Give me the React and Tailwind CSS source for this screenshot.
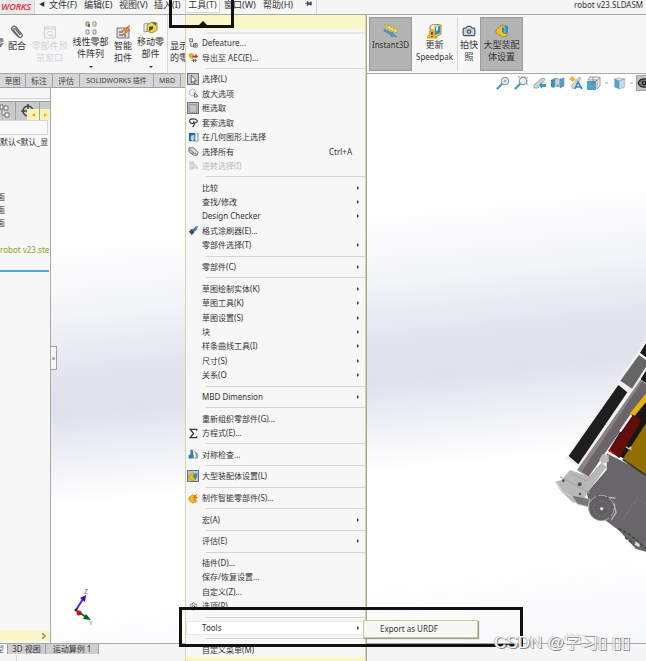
import React from 'react';
import { Camera, Settings, Eye, Pin } from 'lucide-react';

const menus = ['文件(F)', '编辑(E)', '视图(V)', '插入(I)'];

const toolMenu = [
  [
    { label: 'Defeature...', icon: 'defeature' },
    { label: '导出至 AEC(E)...', icon: 'export' }
  ],
  [
    { label: '选择(L)', icon: 'cursor', active: true },
    { label: '放大选项', icon: 'magnify' },
    { label: '框选取', icon: 'box', active: true },
    { label: '套索选取', icon: 'lasso' },
    { label: '在几何图形上选择', icon: 'geometry' },
    { label: '选择所有', icon: 'selectAll', shortcut: 'Ctrl+A' },
    { label: '逆转选择(I)', icon: 'invert', disabled: true }
  ],
  [
    { label: '比较', sub: true },
    { label: '查找/修改', sub: true },
    { label: 'Design Checker', sub: true },
    { label: '格式涂刷器(E)...', icon: 'painter' },
    { label: '零部件选择(T)', sub: true }
  ],
  [{ label: '零部件(C)', sub: true }],
  [
    { label: '草图绘制实体(K)', sub: true },
    { label: '草图工具(K)', sub: true },
    { label: '草图设置(S)', sub: true },
    { label: '块', sub: true },
    { label: '样条曲线工具(I)', sub: true },
    { label: '尺寸(S)', sub: true },
    { label: '关系(O', sub: true }
  ],
  [{ label: 'MBD Dimension', sub: true }],
  [
    { label: '重新组织零部件(G)...' },
    { label: '方程式(E)...', icon: 'sigma' }
  ],
  [{ label: '对称检查...', icon: 'symmetry' }],
  [{ label: '大型装配体设置(L)', icon: 'assembly', active: true }],
  [{ label: '制作智能零部件(S)...', icon: 'smart' }],
  [{ label: '宏(A)', sub: true }],
  [{ label: '评估(E)', sub: true }],
  [
    { label: '插件(D)...' },
    { label: '保存/恢复设置...' },
    { label: '自定义(Z)...' },
    { label: '选项(P)', icon: 'gear' }
  ],
  [{ label: 'Tools', sub: true, open: true }],
  [{ label: '自定义菜单(M)' }]
];

const MenuIcon = ({ name }) => {
  if (name === 'gear') return <Settings className="h-[9px] w-[9px] text-gray-600" />;
  const shapes = {
    defeature: (
      <g fill="none" stroke="#666" strokeWidth="1">
        <rect x="2" y="1" width="3" height="3" />
        <path d="M3 5v4h3M6 6h4v4H6z" />
        <circle cx="8" cy="8" r="1" />
      </g>
    ),
    export: (
      <g>
        <path d="M1 3l3-2 2 2-1 4-3-1z" fill="#e8b820" stroke="#a67c00" strokeWidth=".5" />
        <path d="M5 4h3V2l3 3-3 2V6H5z" fill="#dd2222" />
        <path d="M4 9h6M6 8v3M8 8v3" stroke="#555" strokeWidth="1" />
      </g>
    ),
    cursor: <path d="M4 1v9l2-2 1 3 1.500-.5-1-3h2.500z" fill="#fff" stroke="#333" strokeWidth=".8" />,
    magnify: (
      <g fill="none" stroke="#999">
        <circle cx="5" cy="5" r="3.500" strokeDasharray="2 .6" />
        <path d="M7 5v5l1-1 1 2M7 5l4 4H9" stroke="#666" />
      </g>
    ),
    box: <rect x="1.500" y="1.500" width="9" height="9" fill="#c4c4c4" stroke="#666" strokeDasharray="1.500 1" />,
    lasso: <path d="M6 7C1 8 0 2 5 2s7 3 3 4.500C6 7 5 5 7 5M7 7c0 2-1 3-2 4" fill="none" stroke="#333" strokeWidth="1.200" />,
    geometry: (
      <g>
        <rect x="1" y="1" width="7" height="9" fill="#1e6e92" />
        <path d="M3 4l4-1v5l-2 2-2-2z" fill="#a9d3e6" />
        <path d="M9 2h2v8H8" fill="none" stroke="#888" />
      </g>
    ),
    selectAll: <path d="M1 2h5l5 5-1 3H6L1 6zM2 4l5 4h2M3 8h3" fill="#ddd" stroke="#666" strokeWidth="1" />,
    invert: <path d="M2 2h4v3H2zM6 4v6l2-2 2 2V7zM2 7h3v3H2z" fill="#ddd" stroke="#ccc" strokeWidth="1" />,
    painter: (
      <g>
        <path d="M2 5l4-1 3-3 2 1-2 4-3 2z" fill="#3e7fa5" />
        <path d="M1 7l3-2 3 3-3 3z" fill="#444" />
        <path d="M8 2l3-1-1 3z" fill="#5fb4dc" />
      </g>
    ),
    sigma: <path d="M9.500 3V1.500H2.500L6 6l-3.500 4.500h7V9" fill="none" stroke="#333" strokeWidth="1.400" />,
    symmetry: (
      <g>
        <path d="M1 10V7l2-1V1h2l1 9z" fill="#2d8ab0" stroke="#235c74" strokeWidth=".5" />
        <path d="M7 3l2 1v6H7M9 4l2 3-1 3" fill="none" stroke="#777" />
      </g>
    ),
    assembly: (
      <g>
        <path d="M1 5l4-3 4 1v2L6 6l3 2v2l-4 1-4-3z" fill="#f0bc16" stroke="#917000" strokeWidth=".5" />
        <path d="M7 3l4-1v5L8 9 6 6z" fill="#318db9" />
      </g>
    ),
    smart: (
      <g>
        <path d="M1 5l4-3 4 1v2L6 6l3 2v2l-4 1-4-3z" fill="#f0bc16" stroke="#a67c00" strokeWidth=".6" />
        <path d="M10 1L6 5h4L6 9" fill="none" stroke="#e05a1a" strokeWidth="1" />
      </g>
    )
  };
  return (
    <svg viewBox="0 0 12 12" className="h-[11px] w-[11px]" aria-hidden="true">
      {shapes[name]}
    </svg>
  );
};

const MenuItem = ({ item }) => (
  <div className="relative flex min-h-0 flex-[2_1_0%]">
    <button
      disabled={item.disabled}
      className={`flex min-h-0 w-full items-center text-left text-[8px] leading-[12px] ${
        item.open ? 'border border-gray-200 bg-white' : 'border border-transparent'
      } ${item.disabled ? 'text-[#b8b8b8]' : 'text-[#333]'}`}
    >
      <span
        className={`mr-[3px] flex h-[12px] w-[12px] shrink-0 items-center justify-center ${
          item.active ? 'border border-gray-500 bg-[#c4c4c4]' : ''
        }`}
      >
        {item.icon && <MenuIcon name={item.icon} />}
      </span>
      <span className="grow whitespace-nowrap">{item.label}</span>
      {item.shortcut && <span className="pr-[12px]">{item.shortcut}</span>}
      {item.sub && (
        <svg viewBox="0 0 2 4" className="mr-[5px] h-[4px] w-[2px]" aria-hidden="true">
          <path d="M0 0l2 2-2 2z" fill="#333" />
        </svg>
      )}
    </button>
    {item.open && (
      <button className="absolute top-[-1px] left-full z-10 ml-[-2px] h-[18px] w-[115px] border border-[#cfcb8d] bg-[#f7f7f7] pl-[16px] text-left text-[8px] leading-[16px] whitespace-nowrap text-[#333] shadow-[1px_1px_1px_#999]">
        Export as URDF
      </button>
    )}
  </div>
);

const ToolsMenu = () => (
  <div className="absolute top-[15px] bottom-0 left-[185px] z-10 flex w-[181px] flex-col border-x border-[#d8d5a5] bg-[#f7f7f7] shadow-[1px_0_0_#a5a59c]">
    <div className="flex h-[14px] shrink-0 items-center bg-[#f9f7c5] pl-[13px]">
      <svg viewBox="0 0 8 4" className="mt-[2px] h-[4px] w-[8px]" aria-hidden="true">
        <path d="M0 4l4-4 4 4z" fill="#111" />
      </svg>
    </div>
    <div className="flex h-[7px] shrink-0 items-center pl-[20px]">
      <span className="h-[2px] w-full bg-[#e6e6e6]" />
    </div>
    {toolMenu.map((group, i) => (
      <React.Fragment key={i}>
        {i > 0 && (
          <div className="flex min-h-0 flex-[1_1_0%] items-center pl-[20px]">
            <span className="h-px w-full bg-[#d4d4d4]" />
          </div>
        )}
        {group.map((item) => (
          <MenuItem key={item.label} item={item} />
        ))}
      </React.Fragment>
    ))}
    <div className="h-[4px] shrink-0 bg-[#f9f7c5]" />
  </div>
);

const MenuBar = () => (
  <header className="flex h-[15px] shrink-0 items-start overflow-hidden border-b border-[#a8a8a8] bg-[#f5f5f5] text-[9px] leading-[10px] whitespace-nowrap text-[#333]">
    <div className="flex h-full w-[35px] shrink-0 justify-end border-r border-gray-300 bg-[#e9e9e9] pr-[3px] font-['Open_Sans','Noto_Sans',sans-serif] text-[9px] leading-[14px] font-semibold text-[#e02b33] italic">
      WORKS
    </div>
    <span className="w-[14px] shrink-0 pl-[4px] text-[6px] leading-[8px]">◀</span>
    <nav className="flex shrink-0">
      {menus.map((m) => (
        <button key={m} className="h-[10px] w-[35px] text-left">{m}</button>
      ))}
      <button className="ml-[-4px] h-[13px] w-[35px] border border-t-0 border-gray-300 bg-white pb-[2px] text-center">工具(T)</button>
      <button className="ml-[4px] h-[10px] w-[39px] text-left">窗口(W)</button>
      <button className="h-[10px] w-[38px] text-left">帮助(H)</button>
    </nav>
    <span className="flex h-full w-[16px] shrink-0 justify-center border-r border-gray-300">
      <Pin className="h-[7px] w-[7px] rotate-90 fill-gray-600" />
    </span>
    <div className="ml-auto w-[72px] shrink-0 text-[8px] leading-[9px]">robot v23.SLDASM</div>
  </header>
);

const RibbonButton = ({ lines, icon, width, disabled, arrow, active, top = 'pt-[9px]' }) => (
  <button
    disabled={disabled}
    className={`flex shrink-0 flex-col items-center text-[9px] leading-[12px] whitespace-nowrap ${width} ${top} ${
      active ? 'border border-[#9a9a9a] bg-[#b3b3b3]' : ''
    } ${disabled ? 'text-gray-300' : 'text-[#333]'}`}
  >
    <span className="flex h-[16px] items-center">{icon}</span>
    {lines.map((l) => (
      <span key={l} className={/^[A-Z]/.test(l) ? 'text-[8px]' : ''}>{l}</span>
    ))}
    {arrow && (
      <svg viewBox="0 0 4 2" className="mt-[6px] h-[2px] w-[4px]" aria-hidden="true">
        <path d="M0 0h4L2 2z" fill="#333" />
      </svg>
    )}
  </button>
);

const ClipIcon = () => (
  <svg viewBox="0 0 14 14" className="h-[14px] w-[14px]" fill="none" stroke="#666" strokeWidth="1.300" strokeLinecap="round" aria-hidden="true">
    <path d="M4 6l5 6c1.500 1.500 4-.5 3-2.500L6 2C4 0 .5 2.500 2 5l6 6.500M10 9.500L5.500 4C4.500 3 3 4 3.700 5.200" />
  </svg>
);

const PatternIcon = () => (
  <svg viewBox="0 0 14 15" className="h-[15px] w-[14px]" aria-hidden="true">
    <path d="M2 1h3v4H2z" fill="#e9d13a" stroke="#777" strokeWidth=".8" />
    <path d="M9 1h3v4H9zM2 9h3v4H2zM9 9h3v4H9z" fill="#eee" stroke="#777" strokeWidth=".8" />
    <path d="M4 3h2v3H4z" fill="#2e7c9b" />
    <path d="M9 3h2v2H9z" fill="#e9d13a" />
  </svg>
);

const PreviewIcon = () => (
  <svg viewBox="0 0 14 14" className="h-[13px] w-[14px]" fill="none" stroke="#ccc" aria-hidden="true">
    <path d="M1 1h12v12H1zM1 3h12" />
    <circle cx="7" cy="8" r="2.500" />
    <path d="M9 10l3 2" />
  </svg>
);

const FastenerIcon = () => (
  <svg viewBox="0 0 15 14" className="h-[14px] w-[15px]" aria-hidden="true">
    <path d="M1 3h12v10H1z" fill="#ddd" stroke="#777" />
    <path d="M3 7h4M3 10h4M9 9v3" stroke="#777" strokeWidth="1.500" />
    <path d="M14 0L6 6h4l-3 4 7-5h-4z" fill="#f4a52a" stroke="#d1541c" strokeWidth=".7" />
  </svg>
);

const MoveIcon = () => (
  <svg viewBox="0 0 15 14" className="h-[14px] w-[15px]" aria-hidden="true">
    <path d="M1 3l4-1v8l-4 1z" fill="#eee" stroke="#888" strokeWidth=".8" />
    <path d="M4 4l5-3 5 1v7l-5 3-5-2z" fill="#f0d84a" stroke="#8a7a20" strokeWidth=".8" />
    <path d="M6 6l4-1v3l-4 2z" fill="#444" />
    <path d="M9 2l4-1v4z" fill="#2e7c9b" />
  </svg>
);

const InstantIcon = () => (
  <svg viewBox="0 0 16 14" className="h-[14px] w-[16px]" aria-hidden="true">
    <path d="M3 0l11 5v4L3 4z" fill="#f4dc5a" stroke="#a08a1c" strokeWidth=".4" />
    <path d="M5 3V1M8 4V3M11 6V4" stroke="#8a741a" strokeWidth=".7" />
    <path d="M1 5l8 4V8l5 5-7-1 1-1-7-4z" fill="#4b9cc4" stroke="#2f6e90" strokeWidth=".4" />
  </svg>
);

const SpeedpakIcon = () => (
  <svg viewBox="0 0 15 15" className="h-[15px] w-[15px]" aria-hidden="true">
    <path d="M3 2l4-2 7 1v9l-5 3-6-3z" fill="#e6d24c" stroke="#777" strokeWidth=".8" />
    <path d="M8 3l5-1v7l-5 2z" fill="#2f8fc0" />
    <path d="M4 2l3-1v4l-3 1zM9 3l2-1v4l-2 1z" fill="#fff" />
    <path d="M5 5l5 9H0z" fill="#fbb917" stroke="#c07f00" strokeWidth=".6" />
    <path d="M5 8v3M5 12v1" stroke="#222" strokeWidth="1.300" />
  </svg>
);

const AssemblyIcon = () => (
  <svg viewBox="0 0 14 14" className="h-[14px] w-[14px]" aria-hidden="true">
    <path d="M1 6l6-5 5 1v2L8 7l4 3v2l-4 1-7-4z" fill="#f2c21c" stroke="#8f7110" strokeWidth=".6" />
    <path d="M7 3l5-1 1 1v6l-3 1-3-2z" fill="#318db9" />
    <path d="M8 3l2 1v5" fill="none" stroke="#bde0f0" strokeWidth=".7" />
  </svg>
);

const Ribbon = () => (
  <section className="flex h-[59px] shrink-0 items-stretch overflow-hidden border-b border-[#a8a8a8] bg-[#f7f7f7]">
    <div className="mr-[184px] flex w-[185px] shrink-0 overflow-hidden">
      <span className="flex w-[4px] shrink-0 justify-end overflow-hidden pt-[22px] text-[9px] leading-[12px] text-[#333]">零</span>
      <RibbonButton width="w-[26px]" lines={['配合']} icon={<ClipIcon />} />
      <RibbonButton width="w-[39px]" lines={['零部件预', '览窗口']} icon={<PreviewIcon />} disabled />
      <RibbonButton width="w-[43px]" lines={['线性零部', '件阵列']} icon={<PatternIcon />} arrow top="pt-[5px]" />
      <RibbonButton width="w-[22px]" lines={['智能', '扣件']} icon={<FastenerIcon />} />
      <RibbonButton width="w-[33px]" lines={['移动零', '部件']} icon={<MoveIcon />} arrow top="pt-[5px]" />
      <span className="mr-[2px] w-px shrink-0 bg-gray-300" />
      <button className="flex w-[18px] shrink-0 flex-col pt-[25px] text-[9px] leading-[12px] whitespace-nowrap text-[#333]">
        <span>显示</span>
        <span>的零</span>
      </button>
    </div>
    <div className="flex grow py-[2px]">
      <RibbonButton width="w-[43px]" lines={['Instant3D']} icon={<InstantIcon />} active top="pt-[5px]" />
      <RibbonButton width="w-[45px]" lines={['更新', 'Speedpak']} icon={<SpeedpakIcon />} top="pt-[6px]" />
      <span className="w-px shrink-0 bg-gray-300" />
      <RibbonButton width="w-[22px]" lines={['拍快', '照']} icon={<Camera className="h-[14px] w-[14px] fill-gray-300 text-gray-600" />} top="pt-[6px]" />
      <RibbonButton width="w-[43px]" lines={['大型装配', '体设置']} icon={<AssemblyIcon />} active top="pt-[5px]" />
    </div>
  </section>
);

const CommandTabs = () => (
  <div className="flex h-[14px] shrink-0 bg-white text-[8px] leading-[13px] whitespace-nowrap text-[#444]">
    <nav className="flex w-[186px] shrink-0 overflow-hidden border-b border-gray-400 bg-[#d6d6d6]">
      <button className="w-[26px] shrink-0 border-r border-gray-400">草图</button>
      <button className="w-[27px] shrink-0 border-r border-gray-400">标注</button>
      <button className="w-[27px] shrink-0 border-r border-gray-400">评估</button>
      <button className="w-[74px] shrink-0 border-r border-gray-400 text-[7px]">SOLIDWORKS 插件</button>
      <button className="w-[27px] shrink-0 border-r border-gray-400 text-[7px]">MBD</button>
    </nav>
  </div>
);

const FeatureTree = () => (
  <aside className="flex w-[51px] shrink-0 flex-col overflow-hidden border-r border-[#a8a8a8] bg-[#f7f7f7] text-[8px] leading-[13px] whitespace-nowrap text-[#333]">
    <div className="mb-[2px] h-[11px] shrink-0 border-b border-gray-300" />
    <div className="flex h-[19px] shrink-0 border-t border-gray-400 bg-[#c9c9c9]">
      <button className="w-[16px] shrink-0 border-r border-gray-400" aria-label="特征树">
        <svg viewBox="0 0 12 16" className="h-[16px] w-[12px]" fill="#eee" stroke="#777" aria-hidden="true">
          <path d="M0 2h3v4H0zM4 3h4v4H4zM5 10h4v4H5zM2 6v6h3" />
        </svg>
      </button>
      <button className="relative w-[24px] shrink-0 border-r border-gray-400" aria-label="定位">
        <svg viewBox="0 0 16 16" className="ml-[4px] h-[16px] w-[16px]" fill="none" stroke="#444" strokeWidth="1.500" aria-hidden="true">
          <circle cx="8" cy="8" r="5" />
          <path d="M8 1v14M1 8h14" />
        </svg>
        <span className="absolute right-0 bottom-0 flex h-[11px] w-[12px] items-center justify-center bg-[#f9f3b8] text-[#e0a818]">
          <svg viewBox="0 0 3 4" className="h-[4px] w-[3px]" fill="currentColor" aria-hidden="true"><path d="M3 0v4L0 2z" /></svg>
        </span>
      </button>
      <span className="flex w-[10px] shrink-0 items-end">
        <button aria-label="下一页" className="flex h-[11px] w-full items-center justify-center bg-[#f9f3b8] text-[#e0a818]">
          <svg viewBox="0 0 3 4" className="h-[4px] w-[3px]" fill="currentColor" aria-hidden="true"><path d="M0 0v4l3-2z" /></svg>
        </button>
      </span>
    </div>
    <input aria-label="筛选" className="h-[15px] w-[48px] shrink-0 border border-l-0 border-gray-300 bg-[#fafafa]" />
    <div className="shrink-0">默认&lt;默认_显</div>
    <ul className="mt-[42px] shrink-0">
      {['前视基准面', '上视基准面', '右视基准面'].map((p) => (
        <li key={p} className="flex w-[5px] justify-end overflow-hidden">{p}</li>
      ))}
    </ul>
    <div className="mt-[14px] shrink-0 text-[#92a01e]">robot v23.ste</div>
    <div className="mt-[14px] h-[2px] w-[49px] shrink-0 bg-[#52a5dc]" />
    <div className="mt-auto mb-[2px] flex h-[11px] shrink-0 items-center justify-end bg-[#f9f7c5] pr-[4px]">
      <svg viewBox="0 0 4 6" className="h-[6px] w-[4px]" fill="none" stroke="#888" strokeWidth="1.500" aria-hidden="true">
        <path d="M0 0l3 3-3 3" />
      </svg>
    </div>
  </aside>
);

const ZoomIcon = ({ area }) => (
  <svg viewBox="0 0 14 14" className="h-[14px] w-[14px]" aria-hidden="true">
    {area && <path d="M4 1h9v9" fill="none" stroke="#999" strokeDasharray="2 1" />}
    <circle cx="9" cy="5" r="3.700" fill="#e6f0f5" stroke="#8b9dab" strokeWidth="1.200" />
    <path d="M6 8l-4.500 4.500" stroke="#4f97bd" strokeWidth="2.200" strokeLinecap="round" />
    {!area && <path d="M7.500 5h3M9 3.500v3" stroke="#8b9dab" />}
  </svg>
);

const ViewToolbar = () => (
  <div className="absolute top-0 right-0 flex h-[18px] items-center">
    <button className="w-[18px]" aria-label="整屏显示">
      <ZoomIcon />
    </button>
    <button className="w-[19px]" aria-label="局部放大">
      <ZoomIcon area />
    </button>
    <button className="w-[18px]" aria-label="上一视图">
      <svg viewBox="0 0 14 14" className="h-[14px] w-[14px]" aria-hidden="true">
        <path d="M1 9l8-7 3 1-2 3-5 6H1z" fill="#d4d4d4" stroke="#999" strokeWidth=".8" />
        <path d="M6 9l3-3v2h4v3H9v2z" fill="#3f98c4" />
      </svg>
    </button>
    <button className="w-[18px]" aria-label="剖面视图">
      <svg viewBox="0 0 14 14" className="h-[14px] w-[14px]" aria-hidden="true">
        <path d="M0 4l4-2 4 1v8l-4-1-1 2-3-1z" fill="#3d91bb" />
        <path d="M4 3h5v7l-2-1-3 2z" fill="#bcd3de" stroke="#999" strokeWidth=".5" />
        <path d="M9 3l4-1v8l-4 2z" fill="#4ba5cf" stroke="#777" strokeWidth=".5" />
      </svg>
    </button>
    <button className="w-[18px]" aria-label="动态注解">
      <svg viewBox="0 0 14 15" className="h-[15px] w-[14px]" aria-hidden="true">
        <path d="M0 3l3-3 4 3-3 3z" fill="#f3b63c" />
        <path d="M2 10l8-9 2 1-3 6-5 5z" fill="#d4d4d4" stroke="#999" strokeWidth=".6" />
        <path d="M6 13l3-7 4 7M7 11h5" fill="none" stroke="#338bb8" strokeWidth="1.600" />
      </svg>
    </button>
    <button className="w-[16px]" aria-label="视图定向">
      <svg viewBox="0 0 14 15" className="h-[15px] w-[14px]" aria-hidden="true">
        <path d="M3 1h10v9l-3 3V4H1z" fill="#eee" stroke="#888" strokeWidth=".8" />
        <path d="M0 5h9v9H0z" fill="#4ea4cd" />
        <path d="M9 5l4-3M6 1v7M3 6h6" stroke="#777" strokeWidth=".7" />
      </svg>
    </button>
    <span className="mx-[2px] h-[2px] w-[3px] bg-gray-300" />
    <button className="ml-[3px] w-[17px]" aria-label="显示样式">
      <svg viewBox="0 0 14 14" className="h-[13px] w-[14px]" aria-hidden="true">
        <path d="M1 2l5 2v9l-5-2z" fill="#4ea4cd" />
        <path d="M6 4l6-2v9l-6 2z" fill="#bfd9e5" stroke="#888" strokeWidth=".5" />
        <path d="M1 2l5-1 6 1-6 2z" fill="#dcecf3" stroke="#888" strokeWidth=".5" />
      </svg>
    </button>
    <span className="mr-[3px] h-[2px] w-[3px] bg-gray-300" />
    <button className="flex h-[16px] w-[10px] items-center overflow-hidden border border-r-0 border-gray-400 bg-[#c4c4c4]" aria-label="隐藏项目">
      <Eye className="h-[14px] w-[14px] shrink-0 fill-[#777] text-[#222]" />
    </button>
  </div>
);

const RobotModel = () => (
  <svg viewBox="0 0 318 690" className="absolute top-[242px] right-0 h-[230px] w-[106px]" aria-hidden="true">
    <path d="M200 370l118 60v235l-30-8-50-55-38-28-50-45-10-40 60-70z" fill="#6a656a" />
    <path d="M318 215v120l-68 50-45-22 70-115z" fill="#181717" />
    <path d="M318 28v90L120 412 75 386z" fill="#f1f1f2" />
    <path d="M318 40v42l-18-14z" fill="#191919" />
    <path d="M318 122v38l-16-12z" fill="#191919" />
    <path d="M297 75l21 15v20l-42 66-35-24z" fill="#666" />
    <path d="M235 165l27 22-147 216-29-25z" fill="#1e1e1e" />
    <path d="M302 150l16 12v30L146 440l-34-20z" fill="#6b646b" />
    <path d="M302 150l5 4-183 272-12-6z" fill="#8a848a" />
    <path d="M318 190v26l-34 42-14-8z" fill="#e8b107" />
    <path d="M272 252l5 5-34 50-6-4z" fill="#eee" />
    <path d="M280 255l24 16-66 113-32-22z" fill="#640b0b" />
    <path d="M206 360l14 10" stroke="#ee1717" strokeWidth="5" />
    <path d="M318 280v158l-70-50z" fill="#927000" />
    <path d="M248 388l70 48" stroke="#363333" strokeWidth="5" />
    <path d="M258 350l8 6 8-6m-4 4l4 6" fill="none" stroke="#ccc" strokeWidth="4" />
    <path d="M188 372l18 4v20l-20 6-8-14z" fill="#bbb" />
    <path d="M45 455l20-5 25-30 60 20 34-42 16 12-62 85-10 17-28 6-35-32z" fill="#b8b8b8" />
    <path d="M60 440l90 50M95 432l44 20 40-46M112 420l34 20" fill="none" stroke="#a2a2a2" strokeWidth="3" />
    <path d="M48 455l22 33 45 20" fill="none" stroke="#d8d8d8" strokeWidth="3" />
    <circle cx="70" cy="452" r="4" fill="#555" />
    <circle cx="119" cy="463" r="6" fill="#555" />
    <circle cx="120" cy="492" r="4" fill="#555" />
    <path d="M94 495l18 27 32 8 6-22-20-6z" fill="#777" stroke="#bbb" strokeWidth="3" />
    <circle cx="184" cy="534" r="38" fill="#625f62" stroke="#aaa" strokeWidth="3" strokeDasharray="26 8" />
    <circle cx="184" cy="536" r="23" fill="none" stroke="#878387" strokeWidth="3" strokeDasharray="5 5" />
    <circle cx="185" cy="536" r="5" fill="#ddd" />
    <path d="M206 502l20 2M222 520l6 28-14 22" fill="none" stroke="#bbb" strokeWidth="4" />
    <path d="M318 520l-28-12-50 70" fill="none" stroke="#858085" strokeWidth="2" strokeDasharray="8 5" />
    <path d="M235 596l30 15 53 45M255 622l40 30" fill="none" stroke="#464446" strokeWidth="5" strokeDasharray="10 6" />
    <path d="M288 634l12 10-3 8-14-8z" fill="#ddd" />
  </svg>
);

const AxisTriad = () => (
  <svg viewBox="0 0 22 38" className="absolute bottom-[16px] left-[22px] h-[38px] w-[22px]" aria-hidden="true">
    <path d="M3 21l7-11" stroke="#5a25d0" strokeWidth="2" />
    <path d="M13 6l-1 7-5-4z" fill="#3a10a8" />
    <path d="M4 22l9 6" stroke="#0d7a28" strokeWidth="2" />
    <path d="M18 31l-8-1 3-5z" fill="#0a5c20" />
    <circle cx="6" cy="24" r="2.500" fill="#c90f12" />
    <circle cx="3" cy="21" r="1.500" fill="#5c1616" />
    <text x="11" y="5" fontSize="7" fill="#8a5cf0">Z</text>
    <text x="16" y="36" fontSize="6" fill="#2fae48">Y</text>
  </svg>
);

const Viewport = () => (
  <main className="relative grow overflow-hidden bg-[linear-gradient(174deg,#fff_0%,#fff_25%,#f3f4f8_37%,#e4e5ee_46%,#dfe1eb_53%,#f1f2f7_61%,#fff_68%,#fff_84%,#f6f7fa_100%)]">
    <button
      aria-label="折叠面板"
      className="absolute top-[258px] left-[-1px] flex h-[24px] w-[7px] items-center justify-center border border-l-0 border-gray-400 bg-[#f7f7f7]"
    >
      <span className="h-[3px] w-[3px] rounded-full bg-gray-400" />
    </button>
    <AxisTriad />
    <RobotModel />
  </main>
);

const BottomBar = () => (
  <footer className="h-[18px] shrink-0 overflow-hidden border-t border-[#a8a8a8] bg-[#f5f5f5] text-[8px] leading-[10px] whitespace-nowrap text-[#333]">
    <nav className="flex h-[10px]">
      <button className="flex w-[8px] justify-end overflow-hidden border-r border-gray-400 bg-white pr-[3px]">模型</button>
      <button className="w-[38px] border-r border-gray-400 bg-[#cfcfcf]">3D 视图</button>
      <button className="w-[53px] border-r border-gray-400 bg-[#cfcfcf]">运动算例 1</button>
    </nav>
    <div className="mt-px h-[6px] w-[17px] border-r border-gray-300" />
  </footer>
);

const App = () => (
  <div className="relative flex h-screen flex-col overflow-hidden bg-[#f7f7f7] font-['Noto_Sans','Noto_Sans_CJK_SC',sans-serif]">
    <MenuBar />
    <Ribbon />
    <div className="relative flex min-h-0 grow flex-col">
      <CommandTabs />
      <div className="flex min-h-0 grow">
        <FeatureTree />
        <Viewport />
      </div>
      <ViewToolbar />
    </div>
    <BottomBar />
    <ToolsMenu />

    {/* Highlight frames around the opened menu and the export entry */}
    <div className="pointer-events-none absolute top-[-4px] left-[169px] z-20 h-[32px] w-[65px] border-[3px] border-[#111]" />
    <div className="pointer-events-none absolute bottom-[14px] left-[179px] z-20 h-[40px] w-[344px] border-[3px] border-[#111]" />

    <div className="pointer-events-none absolute right-[16px] bottom-[7px] z-30 font-['Liberation_Sans','Noto_Sans_CJK_SC','DejaVu_Sans',sans-serif] text-[17px] leading-[22px] font-light whitespace-nowrap text-white/90 [text-shadow:1px_1px_0_#888,-1px_0_0_#bbb]">
      CSDN @学习▯ ▯▯
    </div>
  </div>
);

export default App;
